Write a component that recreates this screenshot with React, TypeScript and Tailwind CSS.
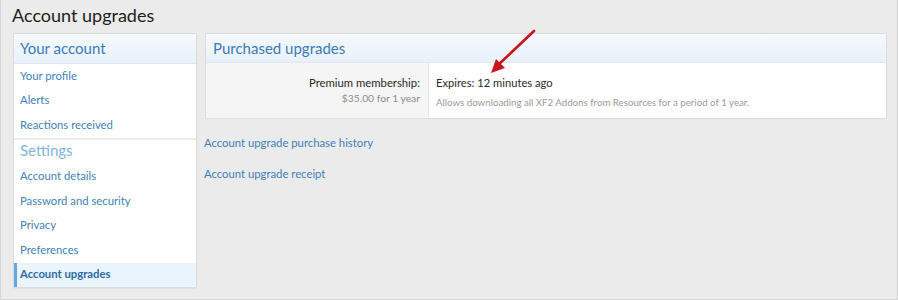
import React from "react";

const navTop = ["Your profile", "Alerts", "Reactions received"];
const navSettings = ["Account details", "Password and security", "Privacy", "Preferences"];

function NavItem({ label, active }: { label: string; active?: boolean }) {
  return (
    <div
      className={`h-[24.5px] flex items-center text-[11.3px] ${
        active
          ? "bg-[#e9f4fd] border-l-[3px] border-[#62a8e0] pl-[3px] font-bold text-[#2d6aa3]"
          : "pl-[6px] text-[#3f7fbb]"
      }`}
    >
      {label}
    </div>
  );
}

export default function App() {
  return (
    <div
      className="w-[898px] h-[300px] bg-[#ebebeb] border-x border-b border-[#d4d4d4] relative overflow-hidden"
      style={{ fontFamily: "'Segoe UI', Lato, 'Open Sans', sans-serif" }}
    >
      <h1 className="pl-[11px] pt-[2px] h-[33px] text-[18px] leading-[26px] text-[#1e1e1e]">Account upgrades</h1>

      <div className="flex gap-[8px] pl-[12px] pr-[10px]">
        {/* sidebar */}
        <div className="w-[184px] shrink-0 bg-white border border-[#dcdcdc] rounded-[2px] shadow-[0_1px_1px_rgba(0,0,0,0.04)]">
          <div className="h-[30px] flex items-center px-[6px] text-[15px] text-[#3a7bb8] bg-gradient-to-b from-[#f5f9fd] to-[#e8f1fa] border-b border-[#e0e7ef]">
            Your account
          </div>
          {navTop.map((l) => (
            <NavItem key={l} label={l} />
          ))}
          <div className="h-[27px] flex items-center px-[6px] pb-[3px] text-[15px] text-[#84b4df] border-t-2 border-[#ececec]">
            Settings
          </div>
          {navSettings.map((l) => (
            <NavItem key={l} label={l} />
          ))}
          <NavItem label="Account upgrades" active />
        </div>

        {/* main */}
        <div className="flex-1 min-w-0">
          <div className="bg-white border border-[#dcdcdc] rounded-[2px]">
            <div className="h-[29px] flex items-center px-[7px] text-[15px] text-[#3a7bb8] bg-gradient-to-b from-[#f5f9fd] to-[#e8f1fa] border-b border-[#e0e7ef]">
              Purchased upgrades
            </div>
            <div className="flex h-[55px]">
              <div className="w-[223px] shrink-0 bg-[#f5f5f5] border-r border-[#e4e4e4] flex flex-col items-end pr-[8px] pt-[12px]">
                <div className="text-[11.3px] leading-[16px] text-[#2a2a2a]">Premium membership:</div>
                <div className="text-[10.3px] leading-[14px] text-[#8c8c8c]">$35.00 for 1 year</div>
              </div>
              <div className="flex-1 pl-[7px] pt-[12px]">
                <div className="text-[11.2px] leading-[16px] text-[#2a2a2a]">Expires: 12 minutes ago</div>
                <div className="mt-[4px] text-[9.7px] leading-[14px] text-[#9a9a9a]">
                  Allows downloading all XF2 Addons from Resources for a period of 1 year.
                </div>
              </div>
            </div>
          </div>
          <div className="mt-[16px] text-[11.3px] text-[#3f7fbb] leading-[16px] -ml-[1px]">
            Account upgrade purchase history
          </div>
          <div className="mt-[15px] text-[11.3px] text-[#3f7fbb] leading-[16px] -ml-[1px]">
            Account upgrade receipt
          </div>
        </div>
      </div>

      {/* annotation arrow */}
      <svg className="absolute left-[482px] top-[26px]" width="60" height="54" viewBox="0 0 60 54">
        <line x1="51" y1="5" x2="14" y2="40" stroke="#c8141c" strokeWidth="2.6" strokeLinecap="round" />
        <path d="M8 47 L13 33 L22 42 Z" fill="#c8141c" />
      </svg>
    </div>
  );
}
